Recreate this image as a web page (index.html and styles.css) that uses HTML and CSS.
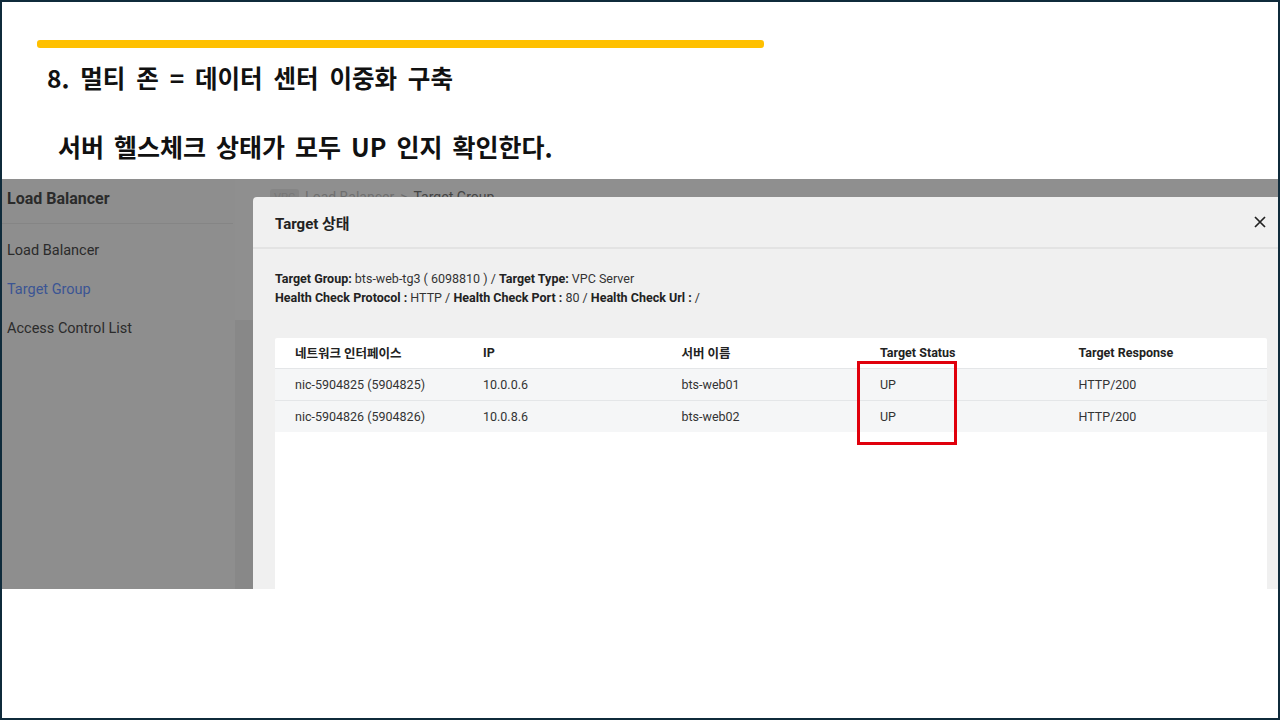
FILE: index.html
```html
<!DOCTYPE html>
<html lang="ko">

<head>
    <meta charset="UTF-8">
    <meta name="viewport" content="width=device-width, initial-scale=1.0">
    <title>멀티 존 - Target 상태</title>
    <link rel="stylesheet" href="styles.css">
</head>

<body>

    <div class="slide">
        <div class="accent"></div>
        <h1 class="title">8. 멀티 존 = 데이터 센터 이중화 구축</h1>
        <p class="subtitle">서버 헬스체크 상태가 모두 UP 인지 확인한다.</p>

        <div class="shot">
            <aside class="side">
                <div class="side-head">Load Balancer</div>
                <ul class="side-menu">
                    <li>Load Balancer</li>
                    <li class="active">Target Group</li>
                    <li>Access Control List</li>
                </ul>
            </aside>

            <div class="content">
                <div class="crumbs">
                    <span class="crumb-badge">VPC</span>
                    <span>Load Balancer</span>
                    <span class="crumb-sep">&gt;</span>
                    <span class="crumb-last">Target Group</span>
                </div>
                <div class="panel"></div>
            </div>

            <div class="modal">
                <div class="modal-head">
                    <h2>Target 상태</h2>
                    <svg class="modal-close" width="12" height="12" viewBox="0 0 12 12">
                        <path d="M1 1L11 11M11 1L1 11" stroke="#222" stroke-width="1.7" fill="none" />
                    </svg>
                </div>
                <div class="modal-info">
                    <p><b>Target Group:</b> bts-web-tg3 ( 6098810 ) / <b>Target Type:</b> VPC Server</p>
                    <p><b>Health Check Protocol :</b> HTTP / <b>Health Check Port :</b> 80 / <b>Health Check Url :</b> /</p>
                </div>
                <div class="table-card">
                    <table class="targets">
                        <colgroup>
                            <col class="col-nic">
                            <col class="col-mid">
                            <col class="col-mid">
                            <col class="col-mid">
                            <col>
                        </colgroup>
                        <thead>
                            <tr>
                                <th>네트워크 인터페이스</th>
                                <th>IP</th>
                                <th>서버 이름</th>
                                <th>Target Status</th>
                                <th>Target Response</th>
                            </tr>
                        </thead>
                        <tbody>
                            <tr>
                                <td>nic-5904825 (5904825)</td>
                                <td>10.0.0.6</td>
                                <td>bts-web01</td>
                                <td>UP</td>
                                <td>HTTP/200</td>
                            </tr>
                            <tr>
                                <td>nic-5904826 (5904826)</td>
                                <td>10.0.8.6</td>
                                <td>bts-web02</td>
                                <td>UP</td>
                                <td>HTTP/200</td>
                            </tr>
                        </tbody>
                    </table>
                </div>
            </div>

            <div class="highlight"></div>
        </div>
    </div>

</body>

</html>
```

FILE: styles.css
```css
* {
    box-sizing: border-box;
    margin: 0;
    padding: 0;
}

body {
    background-color: #fff;
    font-family: Roboto, "Noto Sans CJK KR", sans-serif;
}

.slide {
    width: 1280px;
    height: 720px;
    border: 2px solid #0f2b3b;
    background-color: #fff;
    padding-top: 38px;
    overflow: hidden;
}

.accent {
    width: 727px;
    height: 8px;
    margin-left: 35px;
    background-color: #ffc000;
    border-radius: 3px;
}

.title {
    margin: 13px 0 0 45px;
    font-family: "Noto Sans CJK KR", sans-serif;
    font-size: 24.5px;
    line-height: 34px;
    font-weight: 700;
    color: #111;
    word-spacing: 4px;
}

.subtitle {
    margin: 34px 0 0 56px;
    font-family: "Noto Sans CJK KR", sans-serif;
    font-size: 25px;
    line-height: 34px;
    font-weight: 700;
    color: #111;
    word-spacing: 3px;
}

/* captured console, already dimmed by the modal overlay */
.shot {
    position: relative;
    display: flex;
    height: 410px;
    margin: 16px -2px 0 -2px;
    background-color: #8f8f8f;
    overflow: hidden;
}

.side {
    width: 235px;
    background-color: #8e8e8e;
    color: #2b2b2b;
}

.side-head {
    height: 45px;
    padding: 10px 0 0 7px;
    font-size: 16px;
    font-weight: 700;
    border-bottom: 1px solid #858585;
    margin-right: 2px;
}

.side-menu {
    list-style: none;
    padding-top: 16px;
}

.side-menu li {
    height: 39px;
    padding-left: 7px;
    font-size: 14.5px;
    line-height: 22px;
}

.side-menu li.active {
    color: #3b5594;
}

.content {
    flex: 1;
    display: flex;
    flex-direction: column;
}

.crumbs {
    display: flex;
    align-items: flex-start;
    gap: 6px;
    height: 141px;
    padding: 10px 0 0 35px;
    font-size: 14px;
    color: #6f6f6f;
}

.crumb-badge {
    background-color: #858585;
    border-radius: 3px;
    padding: 0 4px;
    font-size: 11px;
    line-height: 18px;
    color: #777;
}

.crumb-last {
    color: #444;
}

.panel {
    flex: 1;
    background-color: #888;
}

.modal {
    position: absolute;
    left: 253px;
    top: 18px;
    right: 0;
    bottom: -40px;
    background-color: #f0f0f0;
    border-radius: 4px 0 0 0;
    padding: 0 13px 0 22px;
    color: #222;
}

.modal-head {
    display: flex;
    justify-content: space-between;
    align-items: center;
    height: 52px;
    border-bottom: 2px solid #e3e3e3;
    margin: 0 -13px 0 -22px;
    padding: 0 14px 0 22px;
}

.modal-head h2 {
    font-size: 15px;
    font-weight: 700;
    color: #222;
}

.modal-info {
    height: 141px;
    margin-top: -52px;
    padding-top: 72px;
    font-size: 12.5px;
    line-height: 19px;
    color: #333;
}

.modal-info b {
    color: #222;
}

.table-card {
    background-color: #fff;
    height: 400px;
    border-radius: 2px 2px 0 0;
}

.targets {
    width: 100%;
    border-collapse: collapse;
    table-layout: fixed;
    font-size: 12.5px;
    color: #333;
}

.col-nic {
    width: 188px;
}

.col-mid {
    width: 198.5px;
}

.targets th {
    height: 30px;
    padding-left: 20px;
    text-align: left;
    font-weight: 700;
    color: #222;
}

.targets td {
    height: 32px;
    padding-left: 20px;
    background-color: #f5f6f7;
    border-top: 1px solid #e4e6e8;
}

.highlight {
    position: absolute;
    left: 857px;
    top: 182px;
    width: 100px;
    height: 84px;
    border: 3.5px solid #e0000c;
}
```
